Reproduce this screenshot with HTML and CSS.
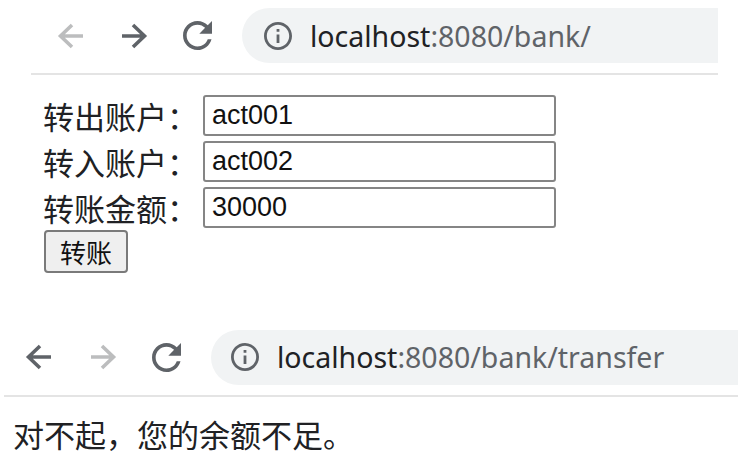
FILE: index.html
```html
<!DOCTYPE html>
<html lang="zh-CN">
<head>
<meta charset="utf-8">
<title>bank</title>
<link rel="stylesheet" href="styles.css">
</head>
<body>
<section class="shot shot-one">
  <div class="toolbar">
    <svg class="icon nav-back disabled" viewBox="0 0 28 28"><path d="M26 14H4M15 3L3.5 14 15 25" fill="none" stroke="currentColor" stroke-width="3.6"/></svg>
    <svg class="icon nav-fwd" viewBox="0 0 28 28"><path d="M2 14h22M13 3l11.5 11L13 25" fill="none" stroke="currentColor" stroke-width="3.6"/></svg>
    <svg class="icon reload" viewBox="4 4 16 16"><path fill="currentColor" d="M17.65 6.35C16.2 4.9 14.21 4 12 4c-4.42 0-7.99 3.58-7.99 8s3.57 8 7.99 8c3.73 0 6.84-2.55 7.73-6h-2.08c-.82 2.33-3.04 4-5.65 4-3.31 0-6-2.69-6-6s2.69-6 6-6c1.66 0 3.14.69 4.22 1.78L13 11h7V4l-2.35 2.35z"/></svg>
    <div class="omnibox">
      <svg class="info" viewBox="2 2 20 20"><path fill="currentColor" d="M11 7h2v2h-2zm0 4h2v6h-2zm1-9C6.48 2 2 6.48 2 12s4.48 10 10 10 10-4.48 10-10S17.52 2 12 2zm0 18c-4.41 0-8-3.59-8-8s3.59-8 8-8 8 3.59 8 8-3.59 8-8 8z"/></svg>
      <span class="url"><span class="host">localhost</span>:8080/bank/</span>
    </div>
  </div>
  <form class="form">
    <label class="lbl">转出账户：</label><input class="field" type="text" value="act001">
    <label class="lbl">转入账户：</label><input class="field" type="text" value="act002">
    <label class="lbl">转账金额：</label><input class="field" type="text" value="30000">
    <button class="btn" type="button">转账</button>
  </form>
</section>
<section class="shot shot-two">
  <div class="toolbar toolbar-two">
    <svg class="icon nav-back" viewBox="0 0 28 28"><path d="M26 14H4M15 3L3.5 14 15 25" fill="none" stroke="currentColor" stroke-width="3.6"/></svg>
    <svg class="icon nav-fwd disabled" viewBox="0 0 28 28"><path d="M2 14h22M13 3l11.5 11L13 25" fill="none" stroke="currentColor" stroke-width="3.6"/></svg>
    <svg class="icon reload" viewBox="4 4 16 16"><path fill="currentColor" d="M17.65 6.35C16.2 4.9 14.21 4 12 4c-4.42 0-7.99 3.58-7.99 8s3.57 8 7.99 8c3.73 0 6.84-2.55 7.73-6h-2.08c-.82 2.33-3.04 4-5.65 4-3.31 0-6-2.69-6-6s2.69-6 6-6c1.66 0 3.14.69 4.22 1.78L13 11h7V4l-2.35 2.35z"/></svg>
    <div class="omnibox">
      <svg class="info" viewBox="2 2 20 20"><path fill="currentColor" d="M11 7h2v2h-2zm0 4h2v6h-2zm1-9C6.48 2 2 6.48 2 12s4.48 10 10 10 10-4.48 10-10S17.52 2 12 2zm0 18c-4.41 0-8-3.59-8-8s3.59-8 8-8 8 3.59 8 8-3.59 8-8 8z"/></svg>
      <span class="url"><span class="host">localhost</span>:8080/bank/transfer</span>
    </div>
  </div>
  <p class="msg">对不起，您的余额不足。</p>
</section>
</body>
</html>
```
FILE: styles.css
```css
* { box-sizing: border-box; }
body {
  margin: 0;
  background: #fff;
  font-family: "Noto Sans CJK SC", "Noto Sans", sans-serif;
  color: #202124;
}
.shot-one { margin-left: 31px; width: 687px; }
.shot-two { margin-left: 4px; width: 734px; margin-top: 47px; }
.toolbar {
  height: 75px;
  display: flex;
  align-items: center;
  border-bottom: 2px solid #e4e4e4;
  padding-bottom: 2px;
}
.toolbar-two { height: 76px; }
.icon { width: 28px; height: 28px; color: #5f6368; flex: none; }
.icon.disabled { color: #bcbdbe; }
.reload { width: 29px; height: 29px; }
.shot-one .nav-back { margin-left: 26px; }
.shot-one .nav-fwd { margin-left: 35px; }
.shot-one .reload { margin-left: 35px; }
.shot-one .omnibox { margin-left: 30px; }
.shot-two .nav-back { margin-left: 21px; }
.shot-two .nav-fwd { margin-left: 36px; }
.shot-two .reload { margin-left: 35px; }
.shot-two .omnibox { margin-left: 30px; padding-left: 20px; }
.omnibox {
  flex: 1;
  height: 55px;
  background: #f1f3f4;
  border-radius: 28px 0 0 28px;
  display: flex;
  align-items: center;
  padding-left: 22px;
}
.info { width: 28px; height: 28px; color: #5f6368; flex: none; }
.url {
  margin-left: 18px;
  font-family: "Noto Sans", sans-serif;
  font-size: 28.5px;
  color: #5f6368;
  white-space: nowrap;
}
.host { color: #202124; }
.form {
  display: grid;
  grid-template-columns: 160px 353px;
  grid-auto-rows: 41px;
  row-gap: 5px;
  align-items: center;
  padding: 20px 0 0 12px;
  margin: 0;
}
.lbl {
  font-size: 31px;
  line-height: 41px;
  color: #202124;
}
.field {
  height: 41px;
  width: 353px;
  border: 2px solid #858585;
  border-radius: 3px;
  padding: 0 7px;
  font-family: "Liberation Sans", Arial, sans-serif;
  font-size: 27px;
  color: #111;
  background: #fff;
  outline: none;
}
.btn {
  grid-column: 1;
  margin-top: -4px;
  margin-left: 1px;
  width: 84px;
  height: 43px;
  background: #efefef;
  border: 2px solid #7a7a7a;
  border-radius: 4px;
  font-family: "Noto Sans CJK SC", sans-serif;
  font-size: 26px;
  color: #111;
  padding: 0;
  line-height: 1;
}
.msg {
  margin: 0;
  padding: 16px 0 0 9px;
  font-size: 31px;
  line-height: 42px;
  color: #202124;
}
```
